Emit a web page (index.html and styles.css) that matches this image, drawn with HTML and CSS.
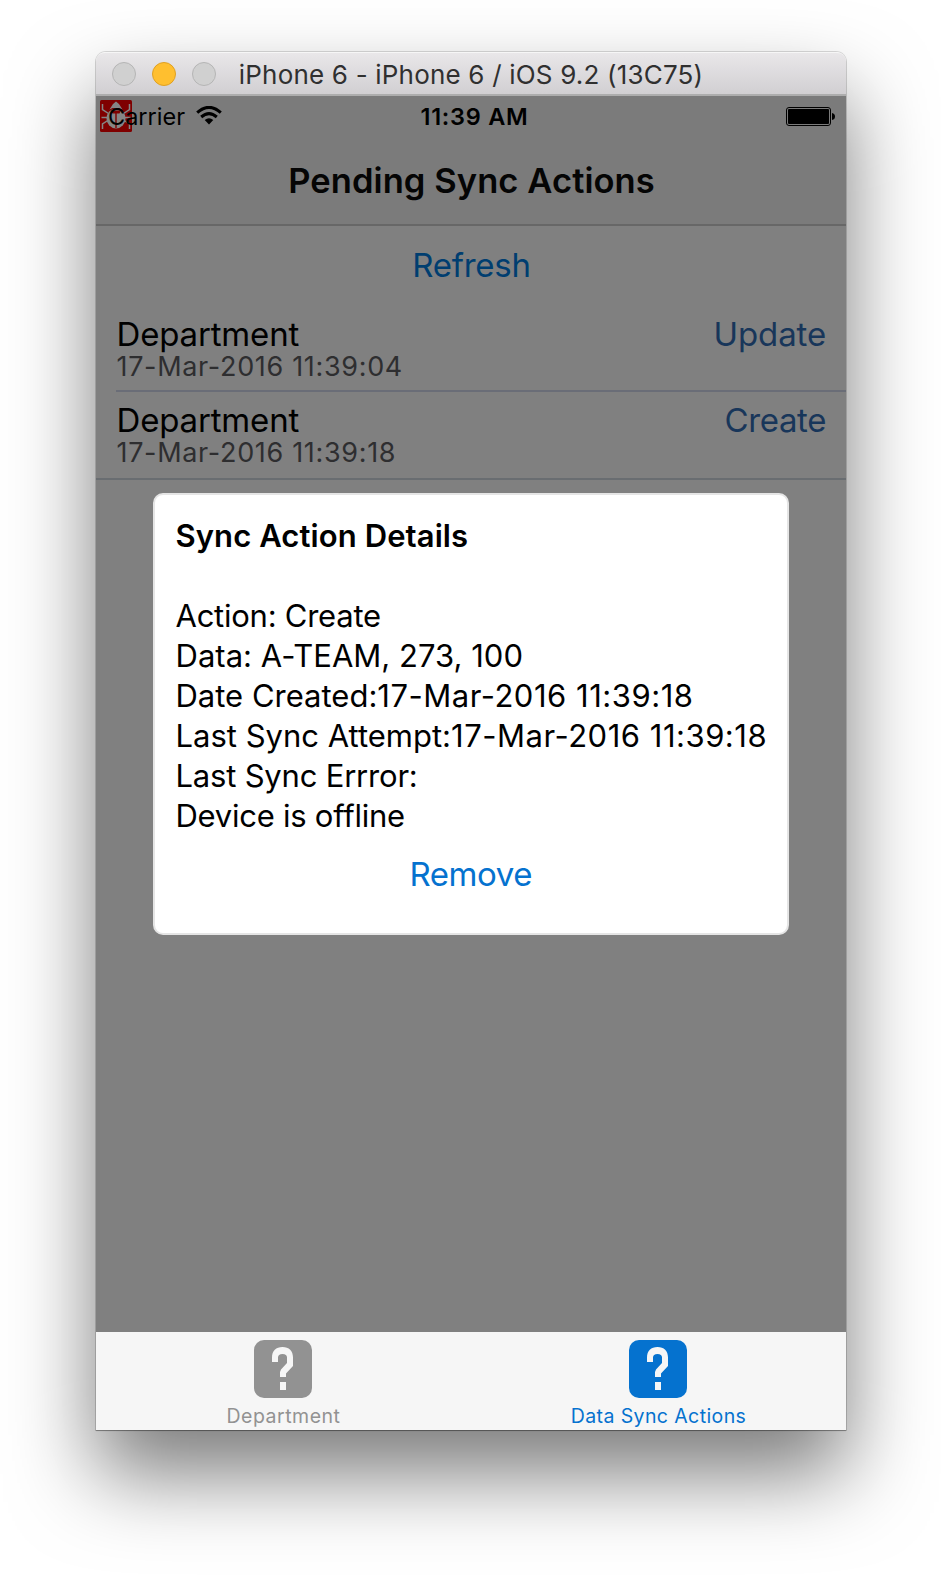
FILE: index.html
```
<!DOCTYPE html>
<html lang="en">
<head>
<meta charset="utf-8">
<title>Pending Sync Actions</title>
<link rel="stylesheet" href="styles.css">
</head>
<body>
<div class="window">
  <header class="titlebar">
    <div class="lights"><i class="light"></i><i class="light light-min"></i><i class="light"></i></div>
    <span class="window-title">iPhone 6 - iPhone 6 / iOS 9.2 (13C75)</span>
  </header>
  <main class="screen">
    <div class="statusbar">
      <svg class="bug" viewBox="0 0 32 32" width="32" height="32">
        <rect width="32" height="32" rx="1.5" fill="#7f0000"/>
        <g fill="none" stroke="#858585" stroke-width="1.5">
          <path d="M2.500 4v5.500l6 4M29.500 4v5.500l-6 4M1.500 17.500h6M30.500 17.500h-6M2.500 29v-5l6-4M29.500 29v-5l-6-4"/>
        </g>
        <path d="M9.500 9.500 13 4l3-2.500L19 4l3.500 5.500-3-1.500h-7z" fill="#858585"/>
        <ellipse cx="16" cy="18.500" rx="9.500" ry="10" fill="#858585"/>
        <path d="M11 10.500h10l-1.500 3h-7zM15.300 13h1.400v15h-1.400z" fill="#7f0000"/>
      </svg>
      <div class="carrier">
        <span>Carrier</span>
        <svg class="wifi" viewBox="0 0 26 19" width="26" height="19">
          <g fill="none" stroke="#000" stroke-width="3">
            <path d="M1.200 6.700Q13-4 24.800 6.700"/>
            <path d="M5.200 11Q13 4.200 20.800 11"/>
          </g>
          <path d="M8.700 14Q13 10.400 17.300 14L13 18.500z"/>
        </svg>
      </div>
      <span class="clock">11:39 AM</span>
      <svg class="battery" viewBox="0 0 49 19" width="49" height="19">
        <rect x=".5" y=".5" width="44" height="18" rx="2.500" fill="none" stroke="#000"/>
        <rect x="2" y="2" width="41" height="15" rx="1"/>
        <path d="M46 6q3 .5 3 3.500t-3 3.500z"/>
      </svg>
    </div>
    <h1 class="nav-title">Pending Sync Actions</h1>
    <div class="refresh">Refresh</div>
    <ul class="list">
      <li class="row">
        <div class="row-main"><span>Department</span><span class="action">Update</span></div>
        <div class="date">17-Mar-2016 11:39:04</div>
      </li>
      <li class="row">
        <div class="row-main"><span>Department</span><span class="action create">Create</span></div>
        <div class="date">17-Mar-2016 11:39:18</div>
      </li>
    </ul>
    <section class="dialog">
      <h2 class="dialog-title">Sync Action Details</h2>
      <p class="line tight">Action: Create</p>
      <p class="line data">Data: A-TEAM, 273, 100</p>
      <p class="line">Date Created:<span class="stamp">17-Mar-2016 11:39:18</span></p>
      <p class="line">Last Sync Attempt:<span class="stamp">17-Mar-2016 11:39:18</span></p>
      <p class="line error">Last Sync Errror:</p>
      <p class="line tight">Device is offline</p>
      <div class="remove">Remove</div>
    </section>
    <nav class="tabs">
      <div class="tab">
        <svg viewBox="0 0 58 58" width="58" height="58">
          <rect width="58" height="58" rx="10" fill="#929292"/>
          <path d="M18 22v-4.500C18 11 22 7 28.500 7S39 11 39 17.500V26l-7 7.500V37h-6v-5l1-2.500 6-6.500v-5.500q0-3.500-4.500-3.500T24 17.500V22zM26 42h6v8h-6z" fill="#f6f6f6"/>
        </svg>
        <span class="tab-label wide">Department</span>
      </div>
      <div class="tab active">
        <svg viewBox="0 0 58 58" width="58" height="58">
          <rect width="58" height="58" rx="10" fill="#0572cf"/>
          <path d="M18 22v-4.500C18 11 22 7 28.500 7S39 11 39 17.500V26l-7 7.500V37h-6v-5l1-2.500 6-6.500v-5.500q0-3.500-4.500-3.500T24 17.500V22zM26 42h6v8h-6z" fill="#f6f6f6"/>
        </svg>
        <span class="tab-label">Data Sync Actions</span>
      </div>
    </nav>
  </main>
</div>
</body>
</html>
```
FILE: styles.css
```
* { box-sizing: border-box; }
body {
  margin: 0;
  height: 1577px;
  overflow: hidden;
  background: #fff;
  font-family: Inter, "Liberation Sans", sans-serif;
  color: #000;
}
h1, h2, p, ul { margin: 0; padding: 0; font-size: inherit; }
ul { list-style: none; }
svg { display: block; }
.window {
  width: 750px;
  height: 1378px;
  margin: 52px 0 0 96px;
  display: flex;
  flex-direction: column;
  border-radius: 10px 10px 0 0;
  box-shadow: 0 0 0 1px rgba(0, 0, 0, .14), 0 1px 1px rgba(0, 0, 0, .3), 0 44px 84px rgba(0, 0, 0, .52);
}
.titlebar {
  position: relative;
  height: 44px;
  display: flex;
  justify-content: center;
  border-top: 1px solid #f6f6f6;
  border-bottom: 2px solid #adadad;
  border-radius: 9px 9px 0 0;
  background: linear-gradient(#e9e7e9, #d1cfd2);
}
.lights {
  position: absolute;
  left: 16px;
  top: 9px;
  display: flex;
  gap: 16px;
}
.light {
  width: 24px;
  height: 24px;
  border: 1px solid #b5b5b5;
  border-radius: 50%;
  background: #d0d0d0;
}
.light-min { background: #ffbf2f; border-color: #dfa023; }
.window-title {
  font-size: 26px;
  line-height: 43px;
  letter-spacing: .19px;
  color: #303030;
  white-space: nowrap;
}
.screen {
  position: relative;
  height: 1334px;
  display: flex;
  flex-direction: column;
  background: #808080;
}
.statusbar {
  position: relative;
  height: 40px;
  padding: 0 11px 0 12px;
  display: grid;
  grid-template-columns: 1fr auto 1fr;
  background: #7b7b7b;
  font-size: 23.5px;
  line-height: 41px;
}
.bug { position: absolute; left: 4px; top: 4px; }
.carrier {
  position: relative;
  display: flex;
  gap: 11px;
  letter-spacing: 0;
}
.wifi { margin-top: 10px; }
.clock { padding-left: 6px; font-weight: 600; letter-spacing: .75px; }
.battery { justify-self: end; margin-top: 11px; }
.nav-title {
  height: 90px;
  padding-left: 1px;
  border-bottom: 2px solid #676767;
  background: #7b7b7b;
  color: #050505;
  font-size: 34.5px;
  font-weight: 600;
  line-height: 89px;
  letter-spacing: .08px;
  text-align: center;
}
.refresh {
  padding-left: 1px;
  color: #003e70;
  font-size: 33px;
  line-height: 78px;
  letter-spacing: -.25px;
  text-align: center;
}
.list { border-bottom: 2px solid #696d71; }
.row { margin-left: 20px; padding: 12px 20px 9px .5px; }
.row + .row { padding: 10px 20px 11px .5px; border-top: 2px solid #6a6d77; }
.row-main {
  display: flex;
  justify-content: space-between;
  font-size: 33px;
  line-height: 36px;
  letter-spacing: -.17px;
}
.action { color: #18365a; letter-spacing: -.13px; }
.action.create { letter-spacing: -.4px; }
.date {
  margin-top: 1px;
  color: #2e2e30;
  font-size: 27px;
  line-height: 28px;
  letter-spacing: .67px;
}
.dialog {
  position: absolute;
  left: 57px;
  top: 397px;
  width: 636px;
  height: 442px;
  padding: 21px 19px 21px 20.500px;
  border: 2px solid #e5e5e5;
  border-radius: 10px;
  background: #fff;
  font-size: 31px;
  line-height: 40px;
}
.dialog-title { margin-bottom: 40px; font-weight: 600; letter-spacing: .09px; }
.line { white-space: nowrap; letter-spacing: 0; }
.tight { letter-spacing: -.25px; }
.data { letter-spacing: .03px; }
.error { letter-spacing: -.2px; }
.stamp { letter-spacing: .52px; }
.remove {
  padding-right: 2px;
  color: #0572cf;
  font-size: 33px;
  line-height: 76px;
  letter-spacing: -.45px;
  text-align: center;
}
.tabs {
  height: 98px;
  margin-top: auto;
  display: grid;
  grid-template-columns: 1fr 1fr;
  background: #f6f6f6;
}
.tab {
  padding-top: 8px;
  display: flex;
  flex-direction: column;
  align-items: center;
  gap: 5px;
  color: #929292;
}
.tab svg { margin-right: 1px; }
.active { color: #0572cf; }
.tab-label { font-size: 19.5px; line-height: 26px; letter-spacing: .4px; }
.tab-label.wide { letter-spacing: .5px; }
```
